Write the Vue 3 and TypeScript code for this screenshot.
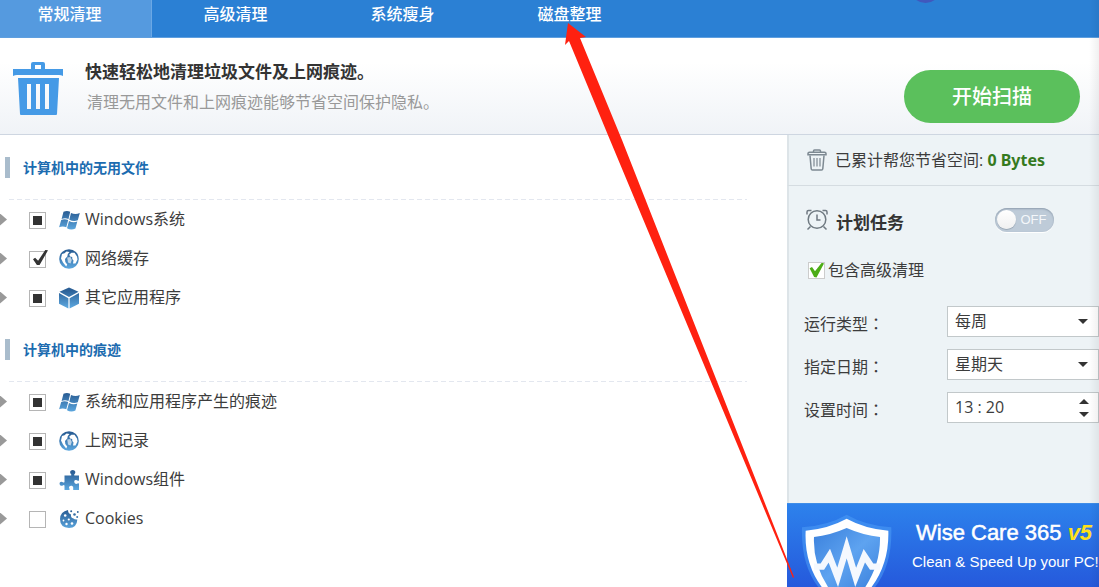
<script setup lang="ts">
import { ref } from 'vue'

type State = 'partial' | 'checked' | 'empty'
type IconName = 'windows' | 'globe' | 'cube' | 'puzzle' | 'cookie'

interface Item {
  id: string
  label: string
  icon: IconName
  state: State
}

interface Section {
  title: string
  items: Item[]
}

const tabs = ['常规清理', '高级清理', '系统瘦身', '磁盘整理']
const activeTab = ref(0)

const sections = ref<Section[]>([
  {
    title: '计算机中的无用文件',
    items: [
      { id: 'win-system', label: 'Windows系统', icon: 'windows', state: 'partial' },
      { id: 'net-cache', label: '网络缓存', icon: 'globe', state: 'checked' },
      { id: 'other-apps', label: '其它应用程序', icon: 'cube', state: 'partial' },
    ],
  },
  {
    title: '计算机中的痕迹',
    items: [
      { id: 'sys-traces', label: '系统和应用程序产生的痕迹', icon: 'windows', state: 'partial' },
      { id: 'web-history', label: '上网记录', icon: 'globe', state: 'partial' },
      { id: 'win-parts', label: 'Windows组件', icon: 'puzzle', state: 'partial' },
      { id: 'cookies', label: 'Cookies', icon: 'cookie', state: 'empty' },
    ],
  },
])

const includeAdvanced = ref(true)
const scheduleOn = ref(false)
const runType = ref('每周')
const runDay = ref('星期天')
const runTime = ref('13 : 20')

function toggle(item: Item) {
  item.state = item.state === 'checked' ? 'empty' : 'checked'
}
</script>

<template>
  <div class="app">
    <svg class="defs" width="0" height="0" aria-hidden="true">
      <linearGradient id="blue" x1="0" y1="0" x2="0" y2="20" gradientUnits="userSpaceOnUse">
        <stop offset="0.1" stop-color="#2b5f96" />
        <stop offset="1" stop-color="#5ca8e0" />
      </linearGradient>
      <linearGradient id="shield" x1="0" y1="0" x2="1" y2="1">
        <stop offset="0" stop-color="#3a80dc" />
        <stop offset="0.5" stop-color="#5ea3f0" />
        <stop offset="1" stop-color="#3a80dc" />
      </linearGradient>
    </svg>

    <nav class="tabs">
      <button
        v-for="(tab, i) in tabs"
        :key="tab"
        type="button"
        class="tab"
        :class="{ active: activeTab === i }"
        @click="activeTab = i"
      >{{ tab }}</button>
      <span class="orb"></span>
    </nav>

    <header class="intro">
      <svg class="bin" viewBox="0 0 52 54" aria-hidden="true">
        <path fill="#459ae6" fill-rule="evenodd" d="M19 7V2q0-2 2-2h10q2 0 2 2v5h18v7q-2-1-4-1H5q-2 0-4 1V7ZM23 7h6V3h-6Z" />
        <path fill="#459ae6" fill-rule="evenodd" d="M6 16h41l-2 36q0 1-1 1H9q-1 0-1-1ZM15 22v25h4V22ZM24 22v25h4V22ZM33 22v25h4V22Z" />
      </svg>
      <div class="intro-text">
        <h1>快速轻松地清理垃圾文件及上网痕迹。</h1>
        <p>清理无用文件和上网痕迹能够节省空间保护隐私。</p>
      </div>
      <button type="button" class="scan">开始扫描</button>
    </header>

    <div class="body">
      <main class="lists">
        <section v-for="section in sections" :key="section.title" class="section">
          <h2>{{ section.title }}</h2>
          <ul>
            <li v-for="item in section.items" :key="item.id">
              <button type="button" class="expand" :aria-label="'展开 ' + item.label"></button>
              <input
                :id="item.id"
                type="checkbox"
                class="box"
                :class="item.state"
                :checked="item.state === 'checked'"
                :indeterminate="item.state === 'partial'"
                @change="toggle(item)"
              />
              <svg class="icon" viewBox="0 0 20 20" aria-hidden="true">
                <g v-if="item.icon === 'windows'" fill="url(#blue)">
                  <path d="M4.500 1.800Q8 .2 11.200 1.800L9.500 9Q6 7.600 2.600 9Z" />
                  <path d="M12 3Q16.500 5 20.800 3L18.800 10.300Q14.500 11.700 10.300 9.700Z" />
                  <path d="M2.200 10Q5.500 8.700 9.200 10.100L7.300 17.300Q3.800 15.800 .1 17.200Z" />
                  <path d="M10 10.900Q14 13 18.300 11.500L16.400 18.500Q12 20.500 8 18.200Z" />
                </g>
                <g v-else-if="item.icon === 'globe'">
                  <circle cx="10" cy="10" r="9.800" fill="url(#blue)" />
                  <path fill="#fff" d="M3 5 5.500 4.200 7.500 2.500 10.500 3 8.800 5 8.300 7.500 6 10 6.300 13 8.200 15.500 7.200 17.500 4 13.500 2 9.500Z" />
                  <path fill="#fff" d="M10.300 5.500 12.500 3.700 15.500 3.800 18 7.500 18.500 10.500 16.500 14.500 14 14.500 14.500 11.500 13.300 10 13.200 8 11 7.500Z" />
                  <path fill="#fff" opacity=".65" d="M8.200 8.500 11.500 8 12.800 11 11.500 14.500 9 13.500Z" />
                </g>
                <g v-else-if="item.icon === 'cube'" fill="url(#blue)">
                  <path d="M10 -.5 19.500 3.700 10 9 .5 3.700Z" />
                  <path d="M0 5 9.400 10.200V20.500L0 15.800Z" />
                  <path d="M20 5 10.600 10.200V20.500L20 15.800Z" />
                </g>
                <path
                  v-else-if="item.icon === 'puzzle'"
                  fill="url(#blue)"
                  d="M5.500 5.500H12.200Q12.800 4.700 11.500 3.500 10.500 1.800 11.700 .7 13.700-.8 15.700.7 17 1.800 16 3.500 14.700 4.700 15.300 5.500H20V10.500Q19.300 11.300 18 10.300 15.800 9.500 15.200 11.300 15 13.500 17 14 18.300 14 19 13.200 20 13 20 14V20H14.200V18.500Q14.800 16.500 12.800 15.700 10.200 15.300 10 17.300 10 18.200 10.500 18.700V20H5.500V15.500Q4.800 14.700 3.800 15.400 2.500 16.300 1.200 15.300 0 14.200.8 12.600 2 11.200 3.800 12.200 4.800 13 5.500 12Z"
                />
                <g v-else>
                  <path fill="url(#blue)" d="M9 1Q9 4.500 12 5.500 11.500 9 14.500 9.500 15.500 10.800 18.300 10.500 18 18.800 10 19 1 18.500 1 10 1.300 2.500 9 1Z" />
                  <g fill="url(#blue)">
                    <circle cx="12.200" cy="2.200" r="1" />
                    <circle cx="15.500" cy="5.500" r="1.300" />
                    <circle cx="18.800" cy="3" r=".9" />
                    <circle cx="18.200" cy="8" r="1" />
                  </g>
                  <g fill="#fff">
                    <circle cx="6.200" cy="6.500" r="1.300" />
                    <circle cx="4.500" cy="11.500" r=".9" />
                    <circle cx="9.800" cy="10.500" r="1.100" />
                    <circle cx="7.500" cy="15" r="1.200" />
                    <circle cx="13" cy="14.500" r="1.300" />
                  </g>
                </g>
              </svg>
              <label :for="item.id">{{ item.label }}</label>
            </li>
          </ul>
        </section>
      </main>

      <aside class="side">
        <div class="saved">
          <svg class="bin-small" viewBox="0 0 20 22" fill="none" stroke="#7d8992" stroke-width="1.500" aria-hidden="true">
            <path d="M6.500 3V2Q6.500 1 7.500 1H12.500Q13.500 1 13.500 2V3" />
            <path d="M1 5.800V4.500Q1 3.300 2.500 3.300H17.500Q19 3.300 19 4.500V5.800Z" />
            <path d="M3 6.500 4.200 19.800Q4.300 21 5.500 21H14.500Q15.700 21 15.800 19.800L17 6.500" />
            <path stroke-width="1.200" d="M7 9V17.500M10 9V17.500M13 9V17.500" />
          </svg>
          <span>已累计帮您节省空间: <strong>0 Bytes</strong></span>
        </div>

        <div class="plan">
          <svg class="clock" viewBox="0 0 22 22" fill="none" stroke="#707a82" stroke-width="1.500" aria-hidden="true">
            <circle cx="11" cy="10.500" r="8.800" />
            <path d="M11 5.500V11H14.500M4.500 17.500 1.500 20.500M17.500 17.500 20.500 20.500" />
            <path d="M1 5.500V3Q1 1.500 2.500 1.500H5.500M21 5.500V3Q21 1.500 19.500 1.500H16.500" />
          </svg>
          <h3 id="plan-title">计划任务</h3>
          <button
            type="button"
            class="switch"
            role="switch"
            :aria-checked="scheduleOn"
            aria-labelledby="plan-title"
            @click="scheduleOn = !scheduleOn"
          ><span class="knob"></span>OFF</button>
        </div>

        <div class="advanced">
          <input id="advanced" v-model="includeAdvanced" type="checkbox" class="green" />
          <label for="advanced">包含高级清理</label>
        </div>

        <div class="fields">
          <label for="run-type">运行类型<span class="colon">：</span></label>
          <div class="control">
            <select id="run-type" v-model="runType">
              <option>每天</option>
              <option>每周</option>
              <option>每月</option>
            </select>
            <span class="down"></span>
          </div>
          <label for="run-day">指定日期<span class="colon">：</span></label>
          <div class="control">
            <select id="run-day" v-model="runDay">
              <option>星期天</option>
              <option>星期一</option>
            </select>
            <span class="down"></span>
          </div>
          <label for="run-time">设置时间<span class="colon">：</span></label>
          <div class="control">
            <input id="run-time" v-model="runTime" type="text" />
            <span class="spin">
              <button type="button" class="up" aria-label="增加"></button>
              <button type="button" class="down" aria-label="减少"></button>
            </span>
          </div>
        </div>

        <a class="banner" href="#">
          <svg class="shield" viewBox="60 69 282 222" aria-hidden="true">
            <path fill="#4d9cf5" opacity=".55" d="M200 74Q255 106 334 112Q338 230 278 300H122Q62 230 66 112Q145 106 200 74Z" />
            <path fill="#fff" d="M200 86Q255 116 325 122Q328 225 268 300H132Q72 225 77 122Q145 116 200 86Z" />
            <path fill="url(#shield)" d="M200 114Q250 136 300 141Q302 225 250 300H150Q98 225 102 141Q150 136 200 114Z" />
            <path fill="none" stroke="#f4f8fe" stroke-width="19" stroke-miterlimit="8" d="M102 230H127L148 197 173 262 200 172 227 262 253 197 275 230H300" />
          </svg>
          <div class="banner-text">
            <div class="brand">Wise Care 365 <em>v5</em></div>
            <div class="slogan">Clean &amp; Speed Up your PC!</div>
          </div>
        </a>
      </aside>
    </div>

    <svg class="pointer" width="800" height="587" viewBox="0 0 800 587" aria-hidden="true">
      <path fill="#ff2110" d="M568 23 586 37 580 38 622 140 794 577 793 578 610 140 569 41 565 45Z" />
    </svg>
    <div class="edge"></div>
  </div>
</template>

<style>
body {
  margin: 0;
}
</style>

<style scoped>
* {
  box-sizing: border-box;
}
.app {
  position: relative;
  display: flex;
  flex-direction: column;
  height: 100vh;
  overflow: hidden;
  background: #fff;
  color: #3c3c3c;
  font-family: "Open Sans", "Noto Sans CJK SC", sans-serif;
  font-size: 16px;
  line-height: 24px;
}
button,
input,
select {
  margin: 0;
  padding: 0;
  border: 0;
  border-radius: 0;
  background: none;
  color: inherit;
  font: inherit;
  appearance: none;
}
h1,
h2,
h3,
p,
ul {
  margin: 0;
  padding: 0;
}
svg {
  display: block;
  flex: none;
}
.defs {
  position: absolute;
}

.tabs {
  position: relative;
  display: flex;
  flex: none;
  height: 38px;
  overflow: hidden;
  background: #2b80d4;
  border-bottom: 1px solid #5f9fdf;
}
.tab {
  width: 167px;
  padding-bottom: 9px;
  color: #fff;
  font-weight: 500;
}
.tab:first-child {
  width: 152px;
  padding-right: 12px;
}
.tab.active {
  background: #559adf;
  border-right: 1px solid #6ba8e5;
}
.orb {
  position: absolute;
  top: -28px;
  left: 910px;
  width: 31px;
  height: 31px;
  border-radius: 50%;
  background: #4058bd;
}

.intro {
  display: flex;
  flex: none;
  align-items: flex-start;
  height: 97px;
  padding: 0 19px 0 12px;
  background: linear-gradient(#fff 25%, #f0f3f7);
  border-bottom: 1px solid #ced6e1;
}
.bin {
  width: 52px;
  height: 54px;
  margin-top: 24px;
}
.intro-text {
  flex: 1;
  margin: 20px 0 0 21px;
}
.intro-text h1 {
  font-size: 17px;
  font-weight: 700;
  line-height: 28px;
  color: #333;
}
.intro-text p {
  padding-left: 2px;
  line-height: 32px;
  color: #999;
}
.scan {
  width: 176px;
  height: 53px;
  margin-top: 32px;
  border-radius: 27px;
  background: #5bc05c;
  color: #fff;
  font-size: 20px;
  font-weight: 500;
}

.body {
  display: flex;
  flex: 1;
  min-height: 0;
}
.lists {
  flex: 1;
}
.section {
  padding-top: 22px;
}
.section h2 {
  height: 21px;
  margin-left: 5px;
  padding-left: 13px;
  border-left: 5px solid #a9bccc;
  color: #1c6cb0;
  font-size: 14px;
  font-weight: 700;
  line-height: 21px;
}
.section ul {
  margin-top: 21px;
  list-style: none;
}
.section ul::before {
  content: "";
  display: block;
  height: 1px;
  margin: 0 40px 0 9px;
  background: repeating-linear-gradient(90deg, #e3e7ef 0 5px, transparent 5px 8px);
}
.section li {
  display: flex;
  align-items: center;
  height: 39px;
}
.expand {
  width: 7px;
  height: 12px;
  background: #999;
  clip-path: polygon(0 0, 100% 50%, 0 100%);
}
.box {
  position: relative;
  width: 17px;
  height: 17px;
  margin: 2px 13px 0 22px;
  border: 1px solid #b5b5b5;
  background: #fff;
}
.box.partial::before {
  content: "";
  position: absolute;
  inset: 3px;
  background: #333;
}
.box.checked::before {
  content: "";
  position: absolute;
  top: -2px;
  left: 3px;
  width: 15px;
  height: 15px;
  background: #333;
  clip-path: polygon(0 62%, 14% 52%, 34% 72%, 82% 0, 100% 2%, 44% 100%, 26% 100%);
}
.icon {
  width: 20px;
  height: 20px;
  overflow: visible;
}
.section label {
  margin-left: 6px;
  padding-bottom: 1px;
}

.side {
  display: flex;
  flex: none;
  flex-direction: column;
  width: 312px;
  background: #edf3f6;
}
.saved,
.plan,
.advanced,
.fields {
  border-left: 2px solid #dde4e8;
}
.saved {
  display: flex;
  flex: none;
  align-items: center;
  gap: 8px;
  height: 51px;
  padding-left: 18px;
  border-bottom: 1px solid #d5dce1;
}
.bin-small {
  width: 20px;
  height: 22px;
}
.saved strong {
  color: #357a1e;
  font-family: "Noto Sans", sans-serif;
}
.plan {
  display: flex;
  align-items: center;
  height: 67px;
  padding: 0 45px 0 17px;
}
.clock {
  width: 22px;
  height: 22px;
}
.plan h3 {
  flex: 1;
  margin: 6px 0 0 8px;
  font-size: 17px;
  font-weight: 700;
  color: #333;
}
.switch {
  position: relative;
  width: 59px;
  height: 24px;
  padding-left: 18px;
  border-radius: 12px;
  background: #becbd8;
  box-shadow: inset 0 1px 2px #8f9eae, 0 1px 0 #fff;
  color: #f4f7fa;
  font-family: "Liberation Sans", sans-serif;
  font-size: 13px;
}
.knob {
  position: absolute;
  top: 2px;
  left: 2px;
  width: 19px;
  height: 19px;
  border-radius: 50%;
  background: linear-gradient(#fff, #f0f0f0);
  box-shadow: 0 1px 1px #98a5b2;
}
.advanced {
  display: flex;
  align-items: center;
  gap: 3px;
  height: 34px;
  padding-left: 19px;
}
.green {
  position: relative;
  width: 17px;
  height: 17px;
  border: 1px solid #ccc;
  background: #fff;
}
.green:checked::before {
  content: "";
  position: absolute;
  inset: 0;
  background: #4cad16;
  clip-path: polygon(4% 38%, 20% 30%, 40% 58%, 86% 0, 100% 6%, 50% 100%, 34% 96%);
}
.fields {
  display: grid;
  flex: 1;
  grid-template-columns: 143px minmax(0, 1fr);
  grid-auto-rows: 31px;
  row-gap: 12px;
  padding: 19px 0 0 15px;
}
.fields > label {
  padding-top: 2px;
  line-height: 31px;
}
.colon {
  font-family: "Noto Sans CJK JP", sans-serif;
}
.control {
  display: flex;
  position: relative;
  background: #fff;
  border: 1px solid #c2c8ca;
}
.control select,
.control input {
  flex: 1;
  min-width: 0;
  height: 29px;
  padding: 0 24px 2px 7px;
}
.down,
.up {
  width: 10px;
  height: 5px;
  background: #333;
  clip-path: polygon(0 0, 100% 0, 50% 100%);
}
.up {
  clip-path: polygon(0 100%, 100% 100%, 50% 0);
}
.control > .down {
  position: absolute;
  top: 12px;
  right: 10px;
  pointer-events: none;
}
.spin {
  position: absolute;
  top: 6px;
  right: 9px;
  display: grid;
  gap: 8px;
}
.banner {
  display: flex;
  flex: none;
  align-items: flex-start;
  height: 84px;
  overflow: hidden;
  background: linear-gradient(#2d82ec, #2559dc);
  border-top: 1px solid #3f8de8;
  color: #fff;
  font-family: "Liberation Sans", sans-serif;
  text-decoration: none;
  white-space: nowrap;
}
.shield {
  width: 94px;
  height: 74px;
  margin: 9px 0 0 13px;
}
.banner-text {
  margin: 13px 0 0 18px;
}
.brand {
  padding-left: 4px;
  font-size: 22px;
  line-height: 32px;
  -webkit-text-stroke: 0.5px #fff;
}
.brand em {
  color: #ffe11a;
  font-weight: 700;
  -webkit-text-stroke: 0;
}
.slogan {
  font-size: 15px;
  line-height: 26px;
}

.pointer {
  position: absolute;
  top: 0;
  left: 0;
  pointer-events: none;
}
.edge {
  position: absolute;
  top: 0;
  right: 0;
  bottom: 0;
  width: 10px;
  background: linear-gradient(90deg, transparent, rgba(0, 0, 0, 0.06));
  pointer-events: none;
}
</style>
